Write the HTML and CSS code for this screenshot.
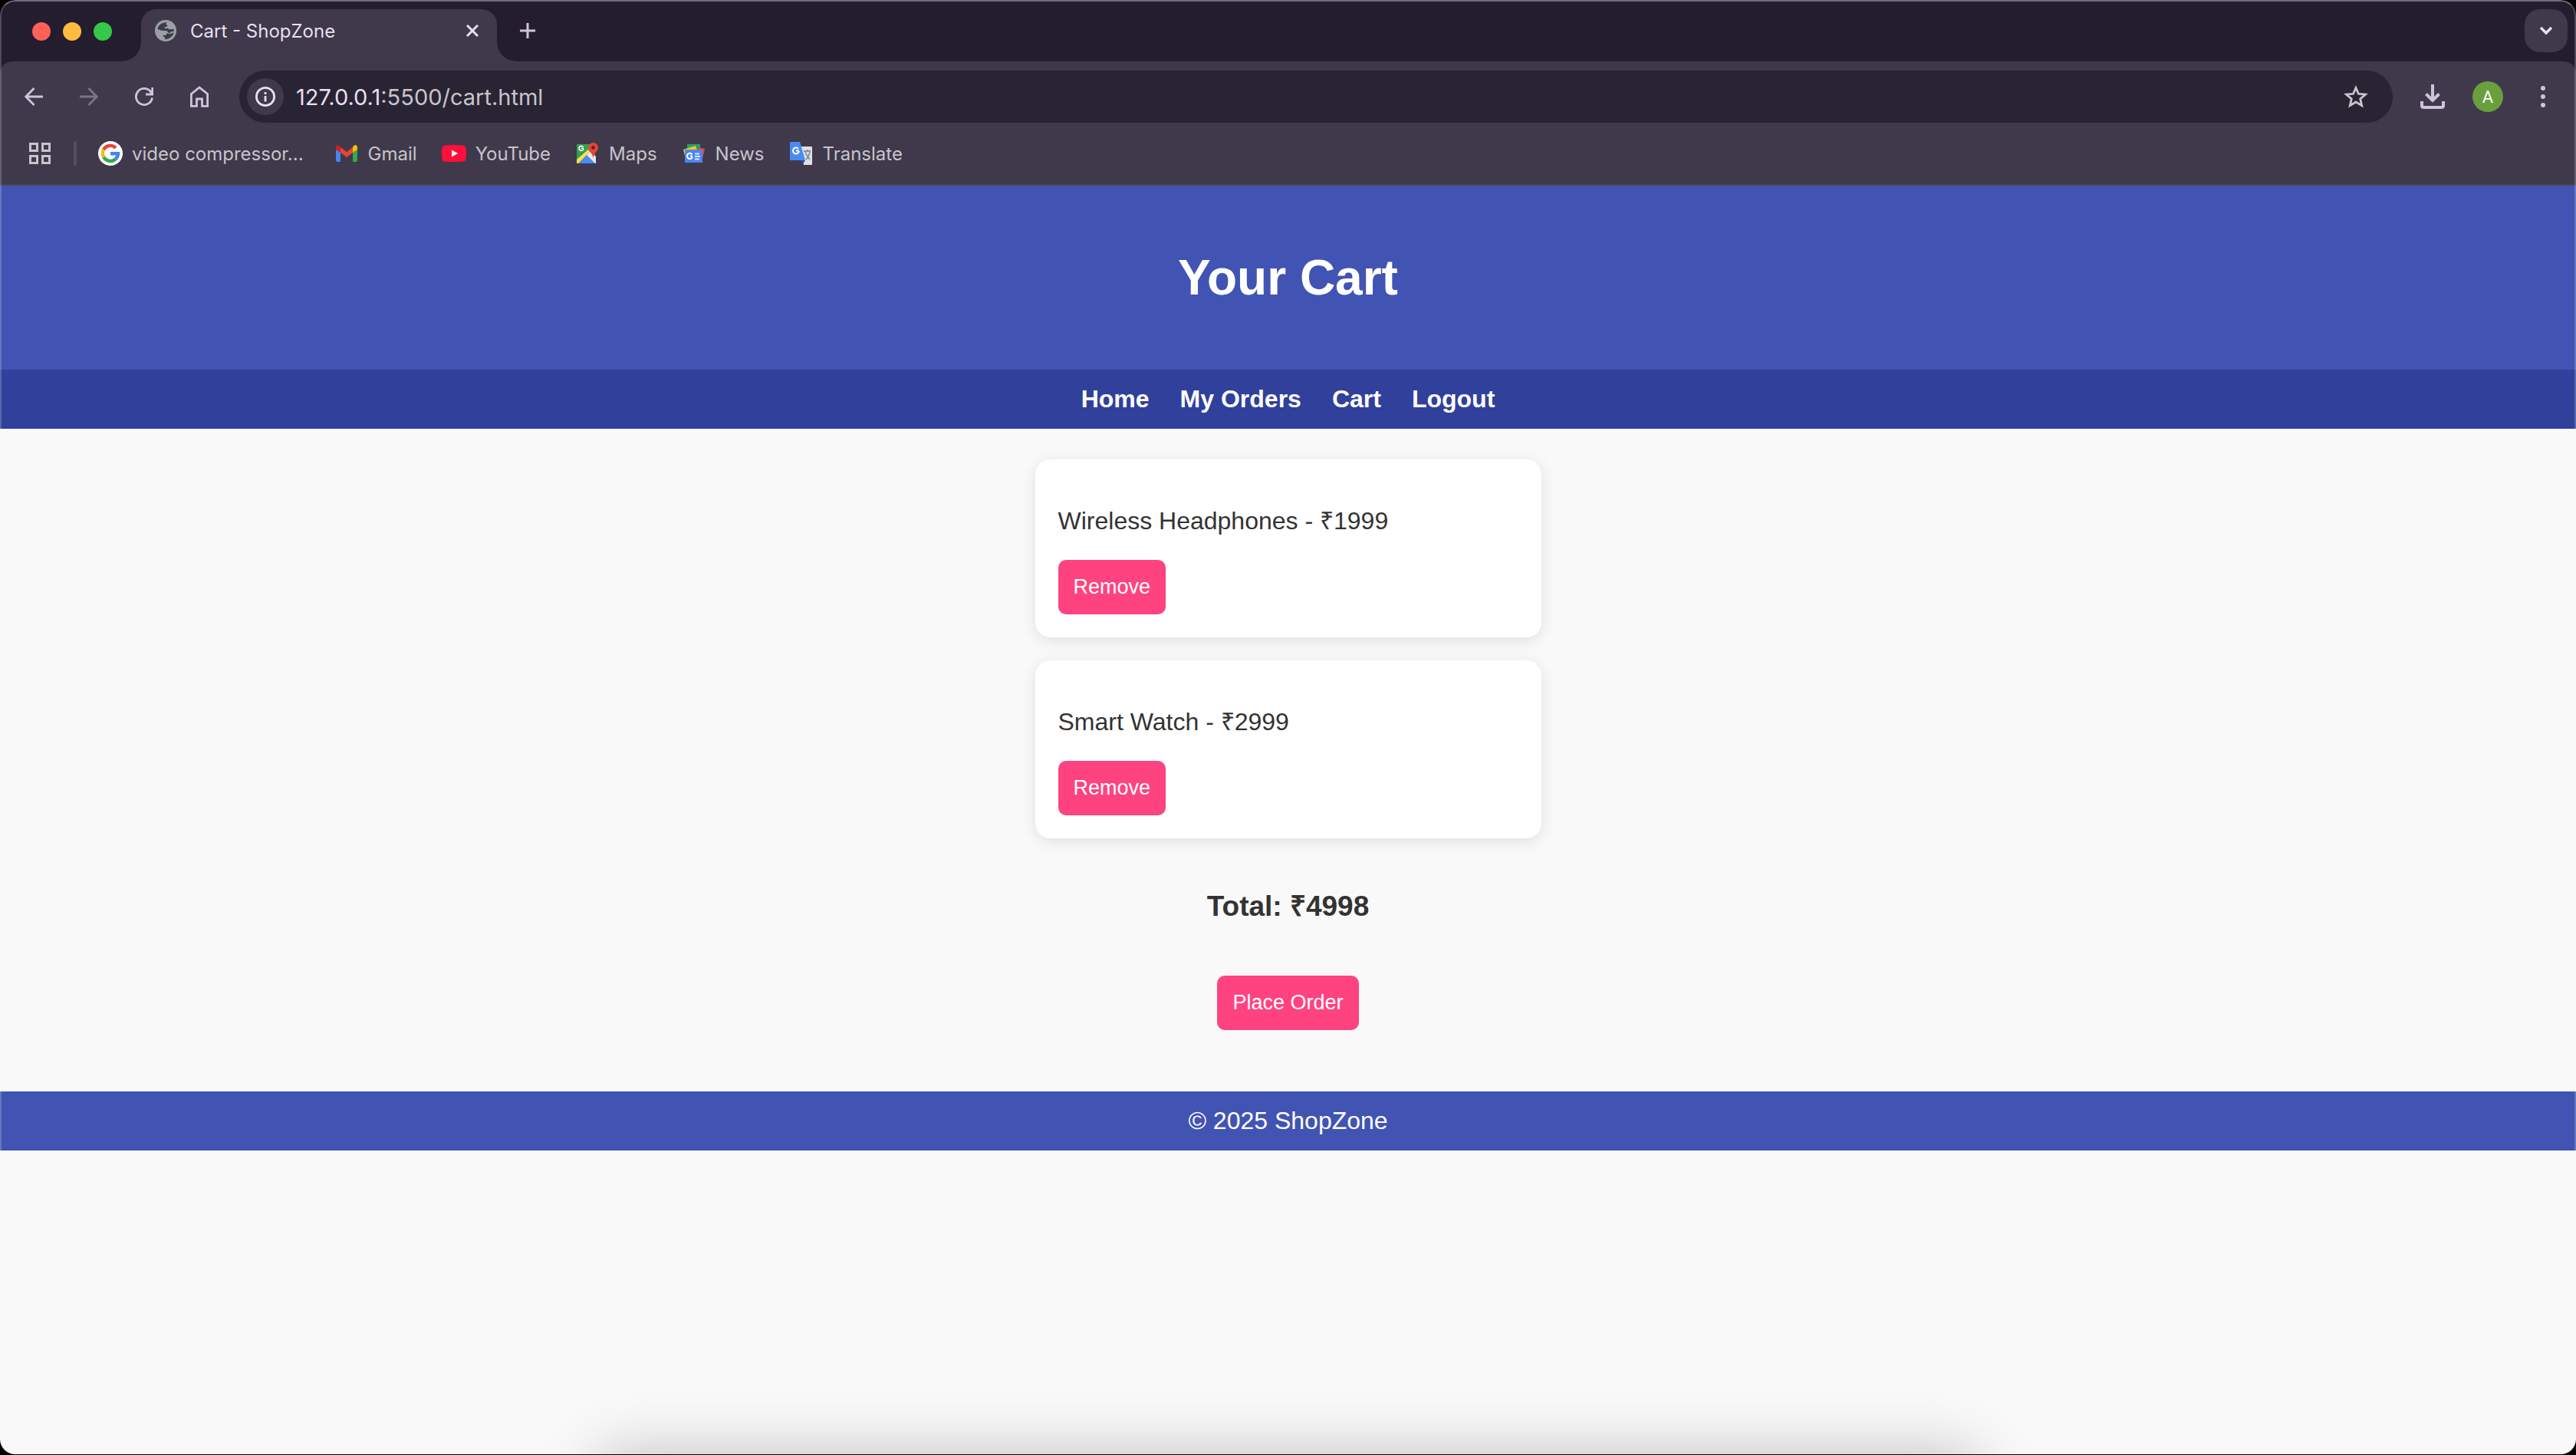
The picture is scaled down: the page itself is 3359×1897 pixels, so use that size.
FILE: index.html
```
<!DOCTYPE html>
<html lang="en">
<head>
<meta charset="utf-8">
<title>Cart - ShopZone</title>
<link rel="stylesheet" href="styles.css">
</head>
<body>
<div class="window">
  <div class="tabstrip">
    <div class="lights">
      <button class="light light-close" aria-label="Close window"></button>
      <button class="light light-min" aria-label="Minimize window"></button>
      <button class="light light-max" aria-label="Zoom window"></button>
    </div>
    <div class="tab">
      <svg class="favicon" viewBox="0 0 28 28" aria-hidden="true">
        <circle cx="14" cy="14" r="14" fill="#9aa0a6"/>
        <path d="M16 3.500C10 2.500 4 6.500 3.500 12C6 12.500 8 14 11 14H14.500C17 14 16.500 17 18.500 17C20.500 17 20.500 15 22.500 15H25C24.800 13.500 24.500 12.500 24 11.500C22 13 19 12 17.500 11.500C16 11 15 11 13 11.200C11.500 11.200 12.500 9 14.500 9C16.500 9 17 7 15.500 6.500C13.800 6 14.500 4 16 3.500Z" fill="#3f394b"/>
        <path d="M11 25C14 25.500 17 25 19 23.800C22 22 24 19.500 24.800 16.500C22 17.500 20 18.500 18 18C17 17.500 16 17.500 15 17.500C15.500 19 15 20 14 20H10.500C10.500 21.500 11.500 22.500 13 22.500V25Z" fill="#3f394b"/>
      </svg>
      <span class="tab-title">Cart - ShopZone</span>
      <button class="icon-btn tab-close" aria-label="Close tab">
        <svg width="16" height="16" viewBox="0 0 16 16"><path d="M1 1L15 15M15 1L1 15" stroke="#e8dff0" stroke-width="3"/></svg>
      </button>
    </div>
    <button class="icon-btn new-tab" aria-label="New tab">
      <svg width="20" height="20" viewBox="0 0 20 20"><path d="M10 0V20M0 10H20" stroke="#d0c4dd" stroke-width="3"/></svg>
    </button>
    <button class="icon-btn tab-search" aria-label="Search tabs">
      <svg width="18" height="12" viewBox="0 0 18 12"><path d="M2 2L9 9L16 2" fill="none" stroke="#e8dff0" stroke-width="3.400"/></svg>
    </button>
  </div>

  <div class="toolbar">
    <div class="nav-buttons">
      <button class="icon-btn" aria-label="Back">
        <svg width="24" height="24" viewBox="0 0 24 24"><path d="M24 12H2M12.500 1L1.800 12L12.500 23" fill="none" stroke="#cfc3dc" stroke-width="2.800"/></svg>
      </button>
      <button class="icon-btn" aria-label="Forward" disabled>
        <svg width="24" height="24" viewBox="0 0 24 24"><path d="M0 12H22M11.500 1L22.200 12L11.500 23" fill="none" stroke="#7b7386" stroke-width="2.800"/></svg>
      </button>
      <button class="icon-btn" aria-label="Reload">
        <svg width="24" height="24" viewBox="0 0 24 24"><path d="M22.500 13.500A10.600 10.600 0 1 1 20 5L22.500 8.500M22.700 0V9H14" fill="none" stroke="#cfc3dc" stroke-width="2.800"/></svg>
      </button>
      <button class="icon-btn" aria-label="Home">
        <svg width="24" height="28" viewBox="0 0 24 28"><path d="M1.400 10.500L12 2L22.600 10.500V26.400H15.500V17H8.500V26.400H1.400Z" fill="none" stroke="#cfc3dc" stroke-width="2.800"/></svg>
      </button>
    </div>
    <div class="omnibox">
      <button class="icon-btn site-info" aria-label="View site information">
        <svg width="26" height="26" viewBox="0 0 26 26"><circle cx="13" cy="13" r="11.600" fill="none" stroke="#e8dff0" stroke-width="2.800"/><path d="M13 12V19.500M13 7V10" stroke="#e8dff0" stroke-width="2.800"/></svg>
      </button>
      <div class="url"><span class="host">127.0.0.1</span>:5500/cart.html</div>
      <button class="icon-btn" aria-label="Bookmark this tab">
        <svg width="32" height="30" viewBox="0 0 32 30"><path d="M16 3.500L19.400 11.300L28.500 12.100L21.700 17.900L23.700 26.700L16 22L8.300 26.700L10.300 17.900L3.500 12.100L12.600 11.300Z" fill="none" stroke="#c8c3cc" stroke-width="2.800"/></svg>
      </button>
    </div>
    <div class="actions">
      <button class="icon-btn" aria-label="Downloads">
        <svg width="32" height="32" viewBox="0 0 32 32" fill="none" stroke="#cfc3dc" stroke-width="4"><path d="M16 0V20"/><path d="M7.500 12.500L16 21L24.500 12.500"/><path d="M2 22V27.500Q2 30 4.500 30H27.500Q30 30 30 27.500V22"/></svg>
      </button>
      <button class="avatar" aria-label="Profile A">A</button>
      <button class="icon-btn" aria-label="Menu">
        <svg width="6" height="28" viewBox="0 0 6 28" fill="#cfc3dc"><circle cx="3" cy="3" r="3"/><circle cx="3" cy="14" r="3"/><circle cx="3" cy="25" r="3"/></svg>
      </button>
    </div>
  </div>

  <nav class="bookmarks" aria-label="Bookmarks">
    <button class="icon-btn" aria-label="Apps">
      <svg width="28" height="28" viewBox="0 0 28 28" fill="none" stroke="#c8c3cc" stroke-width="3"><path d="M1.500 1.500H10.500V10.500H1.500ZM17.500 1.500H26.500V10.500H17.500ZM1.500 17.500H10.500V26.500H1.500ZM17.500 17.500H26.500V26.500H17.500Z"/></svg>
    </button>
    <span class="separator"></span>
    <a class="bookmark bookmark-long" href="#video">
      <svg width="32" height="32" viewBox="0 0 32 32"><circle cx="16" cy="16" r="16" fill="#fff"/><g fill="none" stroke-width="4.400"><path d="M7 11.200A10 10 0 0 1 23 8.900" stroke="#ea4335"/><path d="M7.200 20.800A10 10 0 0 1 7 11.200" stroke="#fbbc05"/><path d="M22.600 23.500A10 10 0 0 1 7.200 20.800" stroke="#34a853"/><path d="M16 16.300H26A10 10 0 0 1 22.400 23.600" stroke="#4285f4"/></g></svg>
      video compressor...
    </a>
    <a class="bookmark" href="#gmail">
      <svg width="32" height="22" viewBox="-1 0 32 22"><path d="M1 4V20Q1 22 3 22H7V9Z" fill="#4285f4"/><path d="M29 4V20Q29 22 27 22H23V9Z" fill="#34a853"/><path d="M7 3L15 9L23 3V10L15 16L7 10Z" fill="#ea4335"/><path d="M1 3.500Q1 0 4 0Q5.500 0 7 2.500V10L1 6Z" fill="#c5221f"/><path d="M29 3.500Q29 0 26 0Q24.500 0 23 2.500V10L29 6Z" fill="#fbbc04"/></svg>
      Gmail
    </a>
    <a class="bookmark" href="#youtube">
      <svg width="32" height="22" viewBox="0 0 32 22"><path d="M4 .5Q16-.5 28 .5Q31 1 31.500 4Q32.500 11 31.500 18Q31 21 28 21.500Q16 22.500 4 21.500Q1 21 .5 18Q-.5 11 .5 4Q1 1 4 .5Z" fill="#ff0f3c"/><path d="M13 6.500V15.500L21 11Z" fill="#fff"/></svg>
      YouTube
    </a>
    <a class="bookmark" href="#maps">
      <svg width="32" height="30" viewBox="-1 0 32 30"><path d="M1 3H25V28H1Z" fill="#34a052"/><path d="M3 28L14 17L25 28Z" fill="#4a8af4"/><path d="M14 17L18 13L26 19V28H25Z" fill="#e8e8ea"/><path d="M1 28V23L16 10L18 13L3 28Z" fill="#fde047"/><path d="M10 8.500H7M9.700 7A3 3 0 1 0 10 9" fill="none" stroke="#fff" stroke-width="1.600"/><path d="M22.500 1A6.500 6.500 0 0 1 29 7.500C29 12 24 13 22.500 21C21 13 16 12 16 7.500A6.500 6.500 0 0 1 22.500 1Z" fill="#e5453a"/><circle cx="22.500" cy="7.500" r="2.400" fill="#7a1d14"/></svg>
      Maps
    </a>
    <a class="bookmark" href="#news">
      <svg width="32" height="26" viewBox="-1 0 32 26"><path d="M6 1H23V9H6Z" fill="#1fa463"/><path d="M1 8L17 3L20 12L4 20Z" fill="#fbc02d"/><path d="M20 5L29 7L26 20H18Z" fill="#e5453a"/><path d="M3 8H26V25H3Z" fill="#4a86f0"/><path d="M13 16.500H10M12.500 14.300A3.600 3.600 0 1 0 13 17.500" fill="none" stroke="#fff" stroke-width="2"/><path d="M16 13.500H22M16 17H23M16 20.500H22" stroke="#dce8fd" stroke-width="2"/></svg>
      News
    </a>
    <a class="bookmark" href="#translate">
      <svg width="32" height="32" viewBox="0 0 32 32"><path d="M14 7H29Q30 7 30 8V30Q30 31 29 31H19Z" fill="#dfe0e2"/><path d="M16 25H21L18 30Z" fill="#3949ab"/><path d="M2 1H14L21 25H2Q1 25 1 24V2Q1 1 2 1Z" fill="#4a8af4"/><path d="M13 12.500H9M12 9.800A4 4 0 1 0 13 13" fill="none" stroke="#fff" stroke-width="2"/><path d="M19 13H28M24 11V13M21 14Q23 20 27 24M27 14Q26 20 22 24" fill="none" stroke="#8495a1" stroke-width="1.800"/></svg>
      Translate
    </a>
  </nav>

  <div class="page">
    <header class="site-header"><h1>Your Cart</h1></header>
    <nav class="site-nav" aria-label="Main">
      <a href="#home">Home</a>
      <a href="#orders">My Orders</a>
      <a href="#cart">Cart</a>
      <a href="#logout">Logout</a>
    </nav>
    <main class="cart">
      <section class="card">
        <p>Wireless Headphones - ₹1999</p>
        <button class="btn">Remove</button>
      </section>
      <section class="card">
        <p>Smart Watch - ₹2999</p>
        <button class="btn">Remove</button>
      </section>
      <h3 class="total">Total: ₹4998</h3>
      <button class="btn">Place Order</button>
    </main>
    <footer class="site-footer">© 2025 ShopZone</footer>
    <div class="dock-shadow"></div>
  </div>
</div>
</body>
</html>
```
FILE: styles.css
```
* { box-sizing: border-box; }

body {
  margin: 0;
  padding-bottom: 1px;
  background: #000;
  font-family: "Liberation Sans", Arial, sans-serif;
  font-size: 32px;
  line-height: 37px;
  color: #333;
}

button { margin: 0; padding: 0; border: 0; font-family: inherit; }
a { color: inherit; text-decoration: none; }
svg { display: block; flex: none; }

.window {
  position: relative;
  display: flex;
  flex-direction: column;
  min-height: calc(100vh - 1px);
  border-radius: 20px;
  overflow: hidden;
  background: #231d2e;
}

/* thin light rim on the window edge */
.window::after {
  content: "";
  position: absolute;
  inset: 0;
  border: 2px solid rgba(255, 255, 255, 0.2);
  border-top-color: rgba(255, 255, 255, 0.35);
  border-bottom: 0;
  border-radius: 20px;
  pointer-events: none;
}

.icon-btn {
  display: flex;
  align-items: center;
  justify-content: center;
  background: none;
}

/* tab strip */
.tabstrip {
  display: flex;
  align-items: center;
  height: 80px;
  padding: 0 11px 0 42px;
}

.lights { display: flex; gap: 16px; margin-right: 38px; padding-top: 2px; }
.light { width: 24px; height: 24px; border-radius: 50%; }
.light-close { background: #ff6159; }
.light-min { background: #ffbb3f; }
.light-max { background: #35c84a; }

.tab {
  position: relative;
  display: flex;
  align-items: center;
  align-self: flex-end;
  width: 464px;
  height: 68px;
  padding: 0 24px 12px 18px;
  border-radius: 20px 20px 0 0;
  background: #3f394b;
  font-family: Inter, sans-serif;
  font-size: 24px;
  color: #e8dff0;
}

.tab::before,
.tab::after {
  content: "";
  position: absolute;
  bottom: 0;
  width: 24px;
  height: 24px;
}
.tab::before { right: 100%; background: radial-gradient(circle at 0 0, transparent 23px, #3f394b 24px); }
.tab::after { left: 100%; background: radial-gradient(circle at 100% 0, transparent 23px, #3f394b 24px); }

.favicon { width: 28px; height: 28px; margin-right: 18px; }
.tab-title { flex: 1; }
.new-tab { width: 40px; height: 40px; margin-left: 20px; }

.tab-search {
  width: 56px;
  height: 56px;
  margin-left: auto;
  border-radius: 20px;
  background: #3f394b;
}

/* toolbar */
.toolbar {
  display: flex;
  align-items: center;
  padding: 12px 40px 12px 32px;
  border-radius: 16px 16px 0 0;
  background: #3f394b;
}

.nav-buttons { display: flex; align-items: center; gap: 48px; margin-right: 40px; }

.omnibox {
  display: flex;
  flex: 1;
  align-items: center;
  height: 68px;
  padding: 0 32px 0 10px;
  border-radius: 34px;
  background: #282433;
}

.site-info { width: 48px; height: 48px; margin-right: 16px; border-radius: 50%; background: #3f394b; }
.url { flex: 1; font-family: Inter, sans-serif; font-size: 29px; color: #c8c3cc; }
.host { color: #e8dff0; }

.actions { display: flex; align-items: center; margin-left: 36px; gap: 36px; }
.actions .icon-btn:last-child { margin-left: 13px; }

.avatar {
  width: 40px;
  height: 40px;
  border-radius: 50%;
  background: #6a9f3d;
  color: #fff;
  font-family: Roboto, sans-serif;
  font-size: 22px;
}

/* bookmarks bar */
.bookmarks {
  display: flex;
  align-items: center;
  height: 70px;
  padding: 0 38px 12px;
  border-bottom: 2px solid #49434d;
  background: #3f394b;
  font-family: Inter, sans-serif;
  font-size: 24px;
  color: #c8c3cc;
}

.separator { width: 4px; height: 32px; margin: 0 28px 0 30px; border-radius: 2px; background: #564f63; }
.bookmark { display: flex; align-items: center; gap: 12px; margin-right: 32px; }
.bookmark-long { margin-right: 40px; }

/* shop page */
.page { position: relative; flex: 1; background: #f9f9f9; overflow: hidden; }

.site-header { padding: 40px; background: #4154b3; color: #fff; text-align: center; }
.site-header h1 { margin: 43px 0; font-size: 64px; line-height: 74px; }

.site-nav {
  display: flex;
  justify-content: center;
  gap: 40px;
  padding: 20px;
  background: #30409b;
  color: #fff;
  font-weight: bold;
}

.cart { display: flex; flex-direction: column; align-items: center; padding: 40px 40px 80px; }

.card {
  width: 660px;
  max-width: 100%;
  margin-bottom: 30px;
  padding: 30px;
  border-radius: 20px;
  background: #fff;
  box-shadow: 0 4px 20px rgba(0, 0, 0, 0.1);
}
.card p { margin: 32px 0; }

.btn {
  display: block;
  padding: 20px;
  border-radius: 10px;
  background: #ff4380;
  color: #fff;
  font-size: 27px;
  line-height: 31px;
}

.total { margin: 37px 0 69px; font-size: 37px; line-height: 43px; }

.site-footer { padding: 20px; background: #4154b3; color: #fff; text-align: center; }

/* soft shadow rising from below the window */
.dock-shadow {
  position: absolute;
  top: 100%;
  left: 23%;
  right: 23%;
  height: 200px;
  border-radius: 40px;
  box-shadow: 0 0 80px rgba(0, 0, 0, 0.24);
}
```
